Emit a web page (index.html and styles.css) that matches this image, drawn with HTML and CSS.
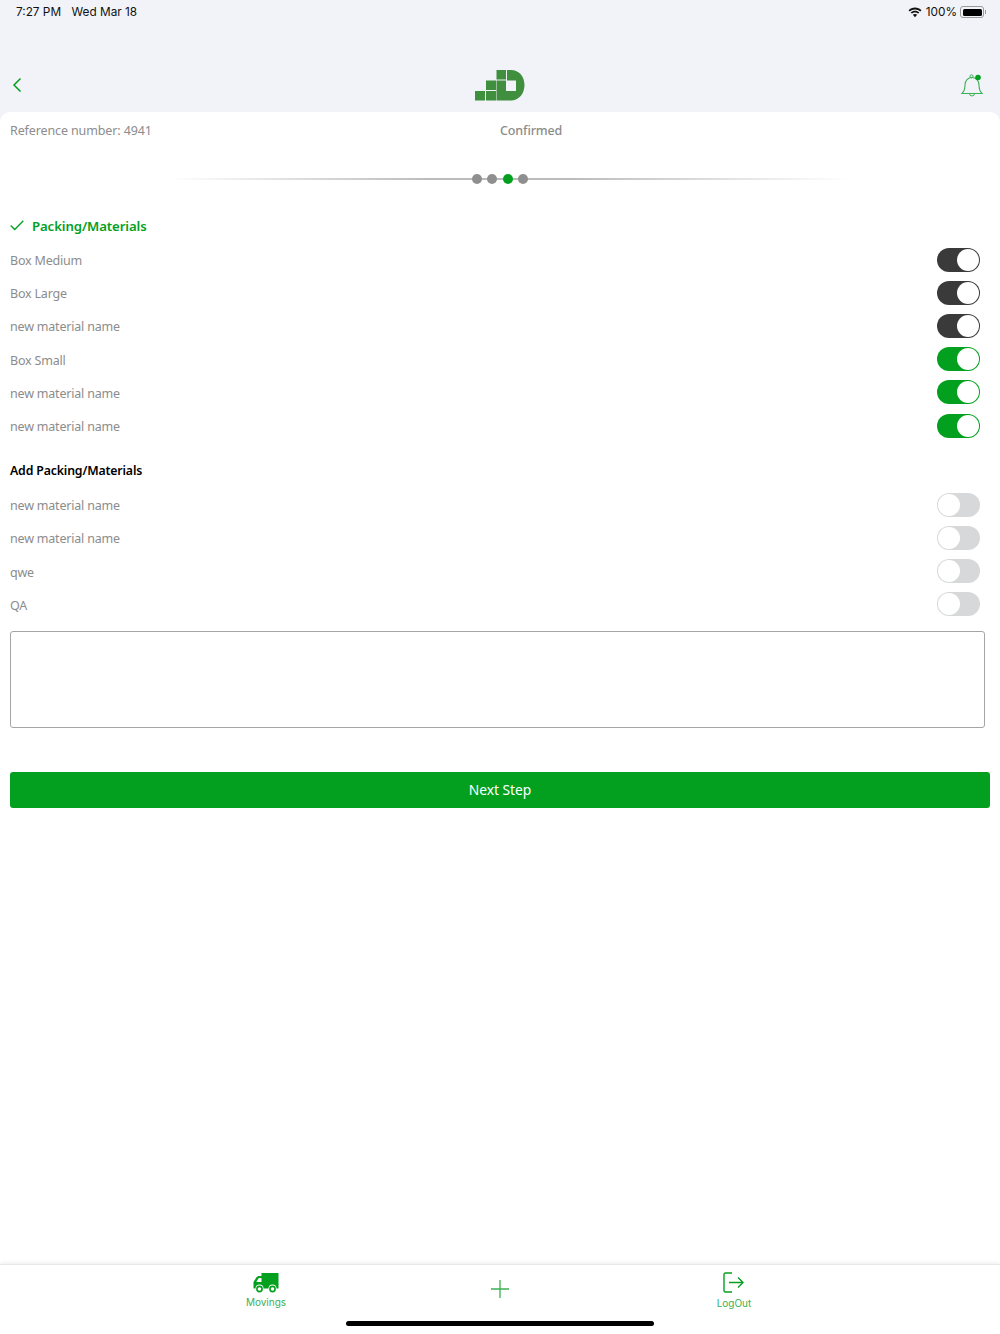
FILE: index.html
```html
<!DOCTYPE html>
<html lang="en">
<head>
  <meta charset="UTF-8">
  <title>Packing/Materials</title>
  <link rel="stylesheet" href="styles.css">
</head>
<body>
  <div class="app">
    <header class="top">
      <div class="status">
        <span class="status-left"><span>7:27 PM</span><span>Wed Mar 18</span></span>
        <span class="status-right">
          <svg class="wifi" width="14" height="11" viewBox="0 0 15 11">
            <path d="M7.500 2.200c2.200 0 4.200.8 5.700 2.200l1.200-1.300C12.600 1.200 10.200.2 7.500.2S2.400 1.200.6 3.100l1.200 1.300C3.300 3 5.300 2.200 7.500 2.200z" fill="#111"/>
            <path d="M7.500 5.400c1.300 0 2.500.5 3.400 1.300l1.200-1.300C10.900 4.200 9.300 3.500 7.500 3.500S4.100 4.200 2.900 5.400l1.200 1.300c.9-.8 2.100-1.300 3.400-1.300z" fill="#111"/>
            <path d="M7.500 7c-.9 0-1.700.3-2.300.9l2.300 2.600 2.300-2.600C9.200 7.300 8.400 7 7.500 7z" fill="#111"/>
          </svg>
          <span>100%</span>
          <span class="battery"><span class="battery-fill"></span></span><span class="battery-cap"></span>
        </span>
      </div>
      <nav class="navbar">
        <svg class="back" width="12" height="16" viewBox="0 0 12 16"><path d="M9.500 1.500L3 8l6.500 6.500" fill="none" stroke="#03a01f" stroke-width="1.500"/></svg>
        <svg class="logo" width="50" height="32" viewBox="0 0 50 32">
          <rect x="0" y="22" width="10" height="9.500" fill="#3f8f3f"/>
          <rect x="11" y="22" width="10" height="9.500" fill="#3f8f3f"/>
          <rect x="11" y="11.500" width="10" height="9.500" fill="#3f8f3f"/>
          <rect x="21.500" y="1" width="9.500" height="9.500" fill="#3f8f3f"/>
          <path d="M21.500 11.500H31V22h10V11.500H32V1h4c8 0 13.500 6.500 13.500 15S44 31.500 36 31.500H21.500z" fill="#3f8f3f"/>
        </svg>
        <svg class="bell" width="24" height="26" viewBox="0 0 24 26">
          <path d="M2 20.500c2-2 3-4 3-8.500 0-4.500 3-7.500 7-7.500s7 3 7 7.500c0 4.500 1 6.500 3 8.500z" fill="none" stroke="#3cb054" stroke-width="1.100"/>
          <circle cx="11.500" cy="3.300" r="1.500" fill="none" stroke="#3cb054"/>
          <path d="M9.500 20.500a2.500 2.500 0 0 0 5 0" fill="none" stroke="#3cb054"/>
          <circle cx="18" cy="4.500" r="2.800" fill="#03a01f"/>
        </svg>
      </nav>
    </header>

    <main class="card">
      <div class="ref-row">
        <span class="ref">Reference number: 4941</span>
        <span class="state">Confirmed</span>
      </div>
      <div class="steps">
        <span class="dot"></span><span class="dot"></span><span class="dot active"></span><span class="dot"></span>
      </div>

      <h2 class="section-title">
        <svg width="14" height="11" viewBox="0 0 14 11"><path d="M.7 5.500l4 4L13.300.7" fill="none" stroke="#03a01f" stroke-width="1.300"/></svg>
        Packing/Materials
      </h2>
      <ul class="rows">
        <li><span class="name">Box Medium</span><span class="toggle dark"></span></li>
        <li><span class="name">Box Large</span><span class="toggle dark"></span></li>
        <li><span class="name">new material name</span><span class="toggle dark"></span></li>
        <li><span class="name">Box Small</span><span class="toggle on"></span></li>
        <li><span class="name">new material name</span><span class="toggle on"></span></li>
        <li><span class="name">new material name</span><span class="toggle on"></span></li>
      </ul>

      <h3 class="add-title">Add Packing/Materials</h3>
      <ul class="rows">
        <li><span class="name">new material name</span><span class="toggle"></span></li>
        <li><span class="name">new material name</span><span class="toggle"></span></li>
        <li><span class="name">qwe</span><span class="toggle"></span></li>
        <li><span class="name">QA</span><span class="toggle"></span></li>
      </ul>

      <div class="notes"></div>
      <button class="next">Next Step</button>
    </main>

    <footer class="tabbar">
      <div class="tab movings">
        <svg width="26" height="21" viewBox="0 0 26 21">
          <path d="M8.500 1H25.500V16.500H23.500a4 4 0 0 0-8 0H10.500a4 4 0 0 0-8 0H1.500c-.6 0-1-.4-1-1V10L3 6C4 4.500 5 4 6.500 4h2z" fill="#03a01f"/>
          <path d="M3.300 10l2-3.300c.3-.4.6-.6 1.100-.6h2.100V10z" fill="#fff"/>
          <circle cx="6.500" cy="17" r="2.600" fill="none" stroke="#03a01f" stroke-width="1.600"/>
          <circle cx="19.500" cy="17" r="2.600" fill="none" stroke="#03a01f" stroke-width="1.600"/>
        </svg>
        <span>Movings</span>
      </div>
      <div class="tab add">
        <svg width="18" height="18" viewBox="0 0 18 18"><path d="M9 0v18M0 9h18" stroke="#3cb054" stroke-width="1.300"/></svg>
      </div>
      <div class="tab logout">
        <svg width="22" height="21" viewBox="0 0 22 21">
          <path d="M9 1H2.500C1.700 1 1 1.700 1 2.500v16c0 .8.700 1.500 1.500 1.500H9" fill="none" stroke="#03a01f" stroke-width="1.400"/>
          <path d="M6 10.500h14M15 5.500l5 5-5 5" fill="none" stroke="#03a01f" stroke-width="1.400"/>
        </svg>
        <span>LogOut</span>
      </div>
      <div class="home-bar"></div>
    </footer>
  </div>
</body>
</html>
```

FILE: styles.css
```css
:root {
  --green: #03a01f;
  --grey: #8c8c8c;
}

* {
  box-sizing: border-box;
}

body {
  margin: 0;
  background: #fff;
  font-family: "Noto Sans", "Open Sans", sans-serif;
}

.app {
  display: flex;
  flex-direction: column;
  height: 1334px;
  overflow: hidden;
  background: #f2f3f8;
}

.top {
  height: 112px;
}

.status {
  display: flex;
  justify-content: space-between;
  height: 24px;
  padding: 4px 14px 0 16px;
  font-family: Inter, sans-serif;
  font-size: 11.800px;
  line-height: 16px;
  color: #111;
}

.status-left {
  display: flex;
  gap: 10.500px;
}

.status-right {
  display: flex;
  align-items: center;
  height: 16px;
}

.wifi {
  margin-right: 4px;
}

.battery {
  display: block;
  width: 24px;
  height: 12px;
  margin-left: 3px;
  padding: 1.500px;
  border: 1px solid #999;
  border-radius: 3px;
}

.battery-fill {
  display: block;
  height: 100%;
  background: #000;
  border-radius: 1.500px;
}

.battery-cap {
  width: 1px;
  height: 4px;
  margin-left: 1px;
  background: #999;
}

.navbar {
  display: grid;
  grid-template-columns: 1fr auto 1fr;
  align-items: center;
  height: 88px;
  padding: 34px 16px 0;
}

.back {
  margin-left: -5px;
}

.bell {
  justify-self: end;
  margin-top: 2px;
}

.card {
  flex: 1;
  padding: 0 10px;
  background: #fff;
  border-radius: 10px 10px 0 0;
}

.ref-row {
  display: flex;
  height: 36px;
  align-items: center;
  font-size: 12.500px;
  letter-spacing: -0.120px;
  color: var(--grey);
}

.ref {
  width: 490px;
}

.state {
  font-weight: 500;
}

.steps {
  display: flex;
  justify-content: center;
  gap: 5.500px;
  height: 10px;
  margin-top: 26px;
  background: linear-gradient(90deg, transparent 160px, #bbb 420px, #bbb 560px, transparent 840px) center / 100% 2px no-repeat;
}

.dot {
  width: 10px;
  height: 10px;
  border-radius: 50%;
  background: #8f8f8f;
}

.dot.active {
  background: var(--green);
}

.section-title {
  display: flex;
  align-items: center;
  gap: 8px;
  margin: 30px 0 0;
  height: 22px;
  padding-top: 1px;
  font-size: 13.200px;
  font-weight: 600;
  letter-spacing: -0.100px;
  color: var(--green);
}

.rows {
  list-style: none;
  margin: 0;
  padding: 0 10px 0 0;
}

.section-title + .rows {
  margin-top: 7px;
}

.rows li {
  display: flex;
  justify-content: space-between;
  align-items: center;
  height: 33.200px;
  font-size: 12.500px;
  letter-spacing: -0.200px;
  color: var(--grey);
}

.name {
  padding-top: 2px;
}

.toggle {
  position: relative;
  width: 43px;
  height: 24px;
  border-radius: 12px;
  background: #d7d8da;
}

.toggle::after {
  content: "";
  position: absolute;
  top: 1px;
  left: 1px;
  width: 22px;
  height: 22px;
  border-radius: 50%;
  background: #fff;
}

.toggle.on {
  background: var(--green);
}

.toggle.dark {
  background: #3a3a3a;
}

.toggle.on::after,
.toggle.dark::after {
  left: auto;
  right: 1px;
}

.add-title {
  margin: 19px 0 7px;
  height: 20px;
  line-height: 20px;
  font-size: 12.300px;
  font-weight: 600;
  letter-spacing: -0.150px;
  color: #000;
}

.notes {
  width: 975px;
  height: 97px;
  margin-top: 10px;
  border: 1px solid #a5a5a5;
  border-radius: 3px;
}

.next {
  display: block;
  width: 100%;
  height: 36px;
  margin-top: 44px;
  border: none;
  border-radius: 3px;
  background: var(--green);
  color: #fff;
  font-family: inherit;
  font-size: 13.800px;
  font-weight: 400;
}

.tabbar {
  position: relative;
  display: flex;
  height: 70px;
  background: #fff;
  border-top: 1px solid #e8e8e8;
  box-shadow: 0 -2px 3px rgba(0, 0, 0, 0.05);
}

.tab {
  position: absolute;
  top: 7px;
  display: flex;
  flex-direction: column;
  align-items: center;
  gap: 3px;
  font-family: Inter, sans-serif;
  font-size: 10px;
  line-height: 13px;
  color: #3cb054;
}

.movings {
  left: 226px;
  width: 80px;
}

.add {
  left: 491px;
  top: 15px;
}

.logout {
  left: 694px;
  width: 80px;
}

.logout span {
  margin-top: 1px;
}

.home-bar {
  position: absolute;
  left: 346px;
  bottom: 8px;
  width: 308px;
  height: 5px;
  border-radius: 3px;
  background: #000;
}
```
